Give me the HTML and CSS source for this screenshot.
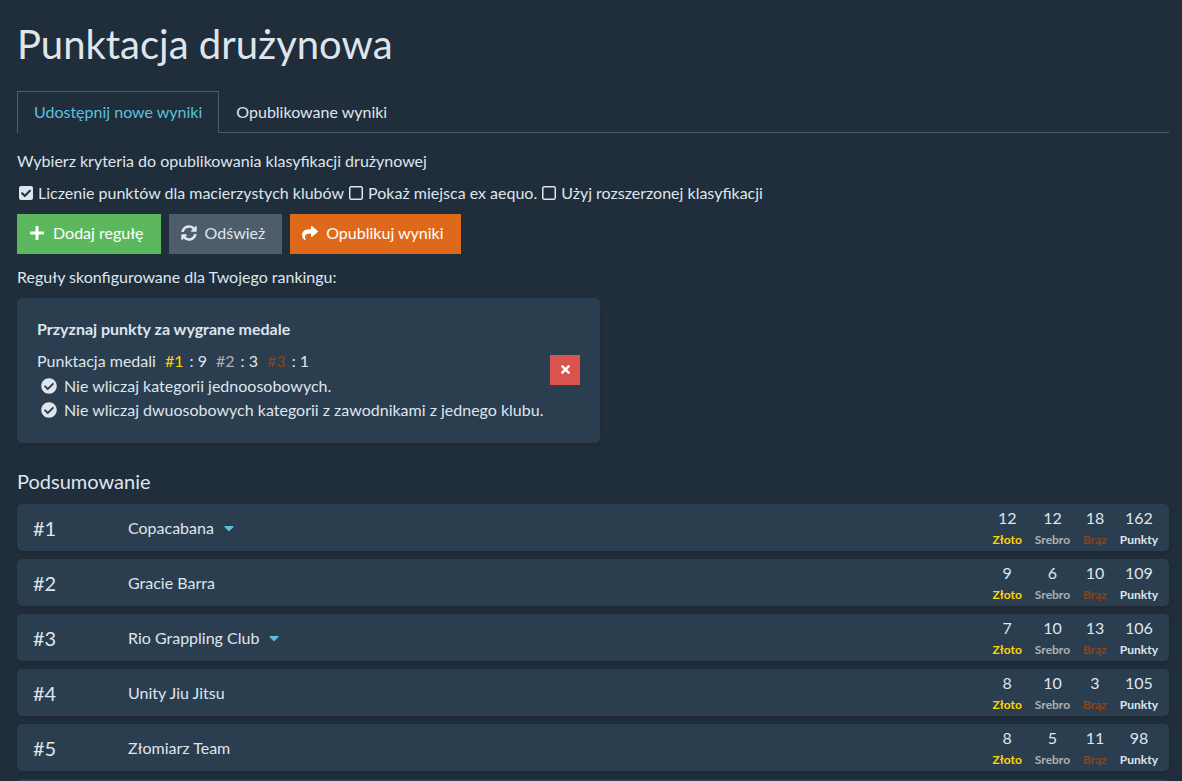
FILE: index.html
```html
<!DOCTYPE html>
<html lang="pl">
<head>
  <meta charset="UTF-8">
  <meta name="viewport" content="width=device-width, initial-scale=1.0">
  <title>Punktacja drużynowa</title>
  <link rel="stylesheet" href="styles.css">
</head>
<body>
  <main class="page">
    <h1>Punktacja drużynowa</h1>
    <nav class="tabs">
      <a class="tab active" href="#nowe">Udostępnij nowe wyniki</a>
      <a class="tab" href="#opublikowane">Opublikowane wyniki</a>
    </nav>

    <p class="intro">Wybierz kryteria do opublikowania klasyfikacji drużynowej</p>
    <div class="options">
      <label class="option"><input type="checkbox" checked>Liczenie punktów dla macierzystych klubów</label>
      <label class="option"><input type="checkbox">Pokaż miejsca ex aequo.</label>
      <label class="option"><input type="checkbox">Użyj rozszerzonej klasyfikacji</label>
    </div>

    <div class="actions">
      <button class="btn btn-success" type="button">
        <svg class="icon" viewBox="-32 0 512 512"><path d="M416 208H272V64c0-17.67-14.33-32-32-32h-32c-17.67 0-32 14.33-32 32v144H32c-17.67 0-32 14.33-32 32v32c0 17.67 14.33 32 32 32h144v144c0 17.67 14.33 32 32 32h32c17.67 0 32-14.33 32-32V304h144c17.67 0 32-14.33 32-32v-32c0-17.67-14.33-32-32-32z"/></svg>
        Dodaj regułę
      </button>
      <button class="btn btn-secondary" type="button">
        <svg class="icon" viewBox="0 0 512 512"><path d="M370.72 133.28C339.458 104.008 298.888 87.962 255.848 88c-77.458.068-144.328 53.178-162.791 126.85-1.344 5.363-6.122 9.15-11.651 9.15H24.103c-7.498 0-13.194-6.807-11.807-14.176C33.933 94.924 134.813 8 256 8c66.448 0 126.791 26.136 171.315 68.685L463.03 40.97C478.149 25.851 504 36.559 504 57.941V192c0 13.255-10.745 24-24 24H345.941c-21.382 0-32.09-25.851-16.971-40.971l41.75-41.749zM32 296h134.059c21.382 0 32.09 25.851 16.971 40.971l-41.75 41.75c31.262 29.273 71.835 45.319 114.876 45.28 77.418-.07 144.315-53.144 162.787-126.849 1.344-5.363 6.122-9.15 11.651-9.15h57.304c7.498 0 13.194 6.807 11.807 14.176C478.067 417.076 377.187 504 256 504c-66.448 0-126.791-26.136-171.315-68.685L48.97 471.03C33.851 486.149 8 475.441 8 454.059V320c0-13.255 10.745-24 24-24z"/></svg>
        Odśwież
      </button>
      <button class="btn btn-primary" type="button">
        <svg class="icon" viewBox="0 0 512 512"><path d="M503.691 189.836L327.687 37.851C312.281 24.546 288 35.347 288 56.015v80.053C127.371 137.907 0 170.1 0 322.326c0 61.441 39.581 122.309 83.333 154.132 13.653 9.931 33.111-2.533 28.077-18.631C66.066 312.814 132.917 274.316 288 272.085V360c0 20.7 24.3 31.453 39.687 18.164l176.004-152c11.071-9.562 11.086-26.753 0-36.328z"/></svg>
        Opublikuj wyniki
      </button>
    </div>

    <p class="rules-title">Reguły skonfigurowane dla Twojego rankingu:</p>
    <section class="rule">
      <div class="rule-body">
        <h2>Przyznaj punkty za wygrane medale</h2>
        <div class="medals">
          <span>Punktacja medali</span>
          <span class="medal"><span class="gold">#1</span> : 9</span>
          <span class="medal"><span class="silver">#2</span> : 3</span>
          <span class="medal"><span class="bronze">#3</span> : 1</span>
        </div>
        <ul class="rule-flags">
          <li><svg class="icon" viewBox="0 0 512 512"><path d="M504 256c0 136.967-111.033 248-248 248S8 392.967 8 256 119.033 8 256 8s248 111.033 248 248zM227.314 387.314l184-184c6.248-6.248 6.248-16.379 0-22.627l-22.627-22.627c-6.248-6.249-16.379-6.249-22.628 0L216 308.118l-70.059-70.059c-6.248-6.248-16.379-6.248-22.628 0l-22.627 22.627c-6.248 6.248-6.248 16.379 0 22.627l104 104c6.249 6.249 16.379 6.249 22.628.001z"/></svg>Nie wliczaj kategorii jednoosobowych.</li>
          <li><svg class="icon" viewBox="0 0 512 512"><path d="M504 256c0 136.967-111.033 248-248 248S8 392.967 8 256 119.033 8 256 8s248 111.033 248 248zM227.314 387.314l184-184c6.248-6.248 6.248-16.379 0-22.627l-22.627-22.627c-6.248-6.249-16.379-6.249-22.628 0L216 308.118l-70.059-70.059c-6.248-6.248-16.379-6.248-22.628 0l-22.627 22.627c-6.248 6.248-6.248 16.379 0 22.627l104 104c6.249 6.249 16.379 6.249 22.628.001z"/></svg>Nie wliczaj dwuosobowych kategorii z zawodnikami z jednego klubu.</li>
        </ul>
      </div>
      <button class="btn-remove" type="button" aria-label="Usuń regułę">
        <svg viewBox="0 0 352 512"><path d="M242.72 256l100.07-100.07c12.28-12.28 12.28-32.19 0-44.48l-22.24-22.24c-12.28-12.28-32.19-12.28-44.48 0L176 189.28 75.93 89.21c-12.28-12.28-32.19-12.28-44.48 0L9.21 111.45c-12.28 12.28-12.28 32.19 0 44.48L109.28 256 9.21 356.07c-12.28 12.28-12.28 32.19 0 44.48l22.24 22.24c12.28 12.28 32.2 12.28 44.48 0L176 322.72l100.07 100.07c12.28 12.28 32.2 12.28 44.48 0l22.24-22.24c12.28-12.28 12.28-32.19 0-44.48L242.72 256z"/></svg>
      </button>
    </section>

    <h3>Podsumowanie</h3>
    <div class="ranking" id="ranking"></div>
  </main>
  <script>
    const teams = [
      { name: 'Copacabana', gold: 12, silver: 12, bronze: 18, points: 162, more: true },
      { name: 'Gracie Barra', gold: 9, silver: 6, bronze: 10, points: 109 },
      { name: 'Rio Grappling Club', gold: 7, silver: 10, bronze: 13, points: 106, more: true },
      { name: 'Unity Jiu Jitsu', gold: 8, silver: 10, bronze: 3, points: 105 },
      { name: 'Złomiarz Team', gold: 8, silver: 5, bronze: 11, points: 98 }
    ];
    const caret = `<button class="toggle" type="button" aria-label="Rozwiń">
      <svg viewBox="0 0 320 512"><path d="M31.3 192h257.3c17.8 0 26.7 21.5 14.1 34.1L174.1 354.8c-7.8 7.8-20.5 7.8-28.3 0L17.2 226.1C4.6 213.5 13.5 192 31.3 192z"/></svg>
    </button>`;
    const score = (value, label, cls) =>
      `<div class="score"><span>${value}</span><span class="score-label ${cls}">${label}</span></div>`;

    const ranking = document.getElementById('ranking');
    teams.forEach((team, i) => {
      const row = document.createElement('div');
      row.className = 'row';
      row.innerHTML = `
        <span class="place">#${i + 1}</span>
        <span class="team">${team.name}${team.more ? caret : ''}</span>
        <div class="scores">
          ${score(team.gold, 'Złoto', 'gold')}
          ${score(team.silver, 'Srebro', 'silver')}
          ${score(team.bronze, 'Brąz', 'bronze')}
          ${score(team.points, 'Punkty', '')}
        </div>`;
      ranking.append(row);
    });
    // pusty wiersz na końcu listy
    const last = document.createElement('div');
    last.className = 'row row-empty';
    ranking.append(last);
  </script>
</body>
</html>
```
FILE: styles.css
```css
:root {
  --bg: #202d3a;
  --panel: #2b3e50;
  --text: #dee5ed;
  --line: #4e5d6c;
  --info: #5bc0de;
}
*, *::before, *::after { box-sizing: border-box; }
html { background: var(--bg); }
body {
  margin: 0;
  font-family: Lato, "Liberation Sans", sans-serif;
  font-size: 16px;
  line-height: 24px;
  color: var(--text);
}
h1, h2, h3, p, ul { margin: 0; padding: 0; }
button { font: inherit; border: none; cursor: pointer; }
svg { fill: currentColor; flex: none; }
.page { padding: 20px 13px 0 17px; }
h1 { font-size: 40px; line-height: 48px; font-weight: 400; margin-bottom: 23px; }

.tabs { display: flex; border-bottom: 1px solid var(--line); margin-bottom: 16px; }
.tab { padding: 8px 16px; border: 1px solid transparent; border-bottom: none; color: var(--text); text-decoration: none; }
.tab.active { color: var(--info); border-color: var(--line); background: var(--bg); margin-bottom: -1px; padding-bottom: 9px; }

.intro { margin-bottom: 8px; }
.options { display: flex; flex-wrap: wrap; gap: 0 5px; margin-bottom: 9px; padding-left: 2px; }
.option { display: flex; align-items: center; gap: 5px; }
.option input {
  appearance: none;
  width: 14px;
  height: 14px;
  margin: 0;
  border-radius: 2px;
  background: url("data:image/svg+xml,%3Csvg xmlns='http://www.w3.org/2000/svg' viewBox='0 32 448 448'%3E%3Cpath fill='%23dee5ed' d='M400 32H48C21.5 32 0 53.5 0 80v352c0 26.5 21.5 48 48 48h352c26.5 0 48-21.5 48-48V80c0-26.5-21.5-48-48-48zm-6 400H54c-3.3 0-6-2.7-6-6V86c0-3.3 2.7-6 6-6h340c3.3 0 6 2.7 6 6v340c0 3.3-2.7 6-6 6z'/%3E%3C/svg%3E");
}
.option input:checked {
  background: var(--text) url("data:image/svg+xml,%3Csvg xmlns='http://www.w3.org/2000/svg' viewBox='0 32 448 448'%3E%3Cpath fill='%23202d3a' d='M195.314 381.941l184-184c6.248-6.248 6.248-16.379 0-22.627l-22.627-22.627c-6.248-6.248-16.379-6.249-22.628 0L184 302.745l-70.059-70.059c-6.248-6.248-16.379-6.248-22.628 0l-22.627 22.627c-6.248 6.248-6.248 16.379 0 22.627l104 104c6.249 6.25 16.379 6.25 22.628.001z'/%3E%3C/svg%3E");
}

.icon { width: 16px; height: 16px; }
.actions { display: flex; gap: 8px; margin-bottom: 11px; }
.btn { display: flex; align-items: center; gap: 8px; padding: 7px 17px 9px 12px; color: #fff; }
.btn-success { background: #5cb85c; }
.btn-secondary { background: #4e5d6c; color: var(--text); }
.btn-primary { background: #df691a; }

.rules-title { margin-bottom: 9px; }
.rule {
  display: flex;
  align-items: center;
  gap: 7px;
  width: fit-content;
  padding: 19px 20px 21px;
  margin-bottom: 26px;
  background: var(--panel);
  border-radius: 5px;
  box-shadow: 0 2px 4px rgba(0,0,0,0.08);
}
.rule h2 { font-size: 16px; line-height: 24px; font-weight: 700; margin-bottom: 8px; }
.medals { display: flex; gap: 9px; margin-bottom: 1px; }
.medal span { margin-right: 2px; }
.rule-flags { list-style: none; }
.rule-flags li { display: flex; align-items: center; gap: 7px; padding-left: 4px; }
.btn-remove { display: flex; align-items: center; justify-content: center; width: 30px; height: 30px; padding: 0; background: #d9534f; color: #fff; }
.btn-remove svg { height: 13px; width: 9px; }

.gold { color: #ffd700; }
.silver { color: #b0b0b0; }
.bronze { color: #8b4513; }

h3 { font-size: 20px; line-height: 24px; font-weight: 400; margin-bottom: 11px; }
.ranking { display: flex; flex-direction: column; gap: 8px; }
.row {
  display: flex;
  align-items: center;
  padding: 2px 11px 2px 16px;
  background: var(--panel);
  border-radius: 5px;
  box-shadow: 0 2px 4px rgba(0,0,0,0.08);
}
.row-empty { height: 47px; }
.place { flex: 0 0 95px; font-size: 20px; }
.team { flex: 1; display: flex; align-items: center; gap: 10px; }
.toggle { display: flex; padding: 0; background: none; color: var(--info); }
.toggle svg { width: 10px; height: 16px; }
.scores { display: flex; gap: 13px; }
.score { display: flex; flex-direction: column; align-items: center; gap: 1px; }
.score-label { font-size: 12px; line-height: 18px; font-weight: 700; }
```
